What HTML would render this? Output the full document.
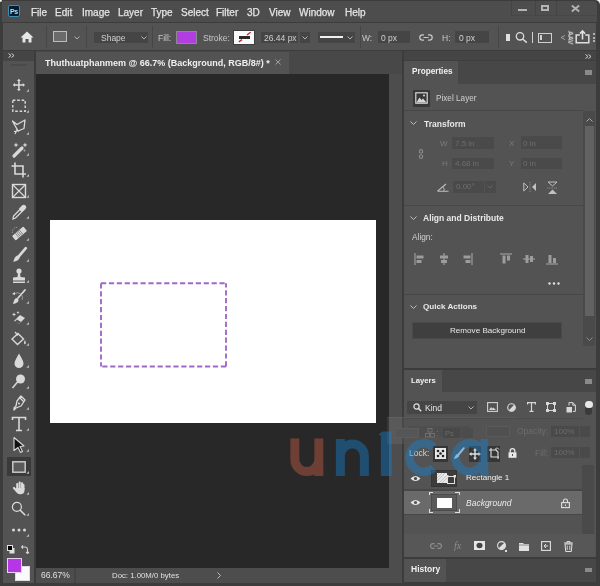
<!DOCTYPE html>
<html><head><meta charset="utf-8">
<style>
*{box-sizing:border-box;margin:0;padding:0}
html,body{width:600px;height:586px;overflow:hidden;background:#f4f4f4}
body{position:relative;-webkit-font-smoothing:antialiased;font-family:"Liberation Sans",sans-serif;color:#d4d4d4}
.a{position:absolute}
.t{position:absolute;white-space:nowrap;line-height:1;will-change:transform}
svg{position:absolute;overflow:visible}
</style></head><body>
<!-- window frame -->
<div class="a" style="left:0;top:0;width:600px;height:586px;background:#3c3c3c;border-top-right-radius:5px;border-top-left-radius:2px"></div>
<!-- menu bar -->
<div class="a" style="left:2px;top:1px;width:595px;height:21px;background:#4d4d4d;border-top-right-radius:4px"></div>

<!-- ps logo -->
<div class="a" style="left:8px;top:5px;width:12px;height:12px;border-radius:2px;background:#001e36;border:1px solid #3d8fb0"></div>
<div class="t" style="left:10px;top:7.5px;font-size:7px;font-weight:bold;color:#b8e0f8;letter-spacing:-0.3px">Ps</div>
<!-- window controls -->
<div class="a" style="left:511px;top:1px;width:1px;height:15px;background:#444"></div>
<div class="a" style="left:535px;top:1px;width:1px;height:15px;background:#444"></div>
<div class="a" style="left:556px;top:1px;width:1px;height:15px;background:#444"></div>
<div class="a" style="left:511px;top:15px;width:85px;height:1px;background:#474747"></div>
<div class="a" style="left:518px;top:9px;width:9px;height:2px;background:#b4b4b4"></div>
<div class="a" style="left:541px;top:5px;width:8px;height:6px;border:2px solid #b4b4b4"></div>
<svg style="left:571px;top:5px" width="9" height="7" viewBox="0 0 9 7"><path d="M0.8 0.5 L8.2 6.5 M8.2 0.5 L0.8 6.5" stroke="#b4b4b4" stroke-width="1.8"/></svg>
<!-- corners -->
<div class="a" style="left:0;top:0;width:2px;height:2px;background:#f0f0f0;border-bottom-right-radius:2px"></div>
<div id="menu">
<div class="t" style="left:31px;top:7.5px;font-size:10px;color:#e4e4e4;-webkit-text-stroke:0.25px #e4e4e4">File</div>
<div class="t" style="left:55px;top:7.5px;font-size:10px;color:#e4e4e4;-webkit-text-stroke:0.25px #e4e4e4">Edit</div>
<div class="t" style="left:82px;top:7.5px;font-size:10px;color:#e4e4e4;-webkit-text-stroke:0.25px #e4e4e4">Image</div>
<div class="t" style="left:118px;top:7.5px;font-size:10px;color:#e4e4e4;-webkit-text-stroke:0.25px #e4e4e4">Layer</div>
<div class="t" style="left:151px;top:7.5px;font-size:10px;color:#e4e4e4;-webkit-text-stroke:0.25px #e4e4e4">Type</div>
<div class="t" style="left:181px;top:7.5px;font-size:10px;color:#e4e4e4;-webkit-text-stroke:0.25px #e4e4e4">Select</div>
<div class="t" style="left:216px;top:7.5px;font-size:10px;color:#e4e4e4;-webkit-text-stroke:0.25px #e4e4e4">Filter</div>
<div class="t" style="left:247px;top:7.5px;font-size:10px;color:#e4e4e4;-webkit-text-stroke:0.25px #e4e4e4">3D</div>
<div class="t" style="left:269px;top:7.5px;font-size:10px;color:#e4e4e4;-webkit-text-stroke:0.25px #e4e4e4">View</div>
<div class="t" style="left:299px;top:7.5px;font-size:10px;color:#e4e4e4;-webkit-text-stroke:0.25px #e4e4e4">Window</div>
<div class="t" style="left:345px;top:7.5px;font-size:10px;color:#e4e4e4;-webkit-text-stroke:0.25px #e4e4e4">Help</div>
</div>
<!-- options bar -->
<div class="a" style="left:3px;top:23px;width:593px;height:27px;background:#535353"></div>

<!-- options content -->
<div class="a" style="left:46px;top:26px;width:1px;height:22px;background:#464646"></div>
<div class="a" style="left:86px;top:26px;width:1px;height:22px;background:#464646"></div>
<div class="a" style="left:152px;top:26px;width:1px;height:22px;background:#464646"></div>
<div class="a" style="left:360px;top:26px;width:1px;height:22px;background:#464646"></div>
<div class="a" style="left:498px;top:26px;width:1px;height:22px;background:#464646"></div>
<svg style="left:20px;top:31px" width="14" height="12" viewBox="0 0 14 12"><path d="M7 0.5 L13.5 6.5 L11.5 6.5 L11.5 11.5 L8.5 11.5 L8.5 8 L5.5 8 L5.5 11.5 L2.5 11.5 L2.5 6.5 L0.5 6.5 Z" fill="#e6e6e6"/></svg>
<div class="a" style="left:53px;top:31px;width:14px;height:11px;border:1.5px solid #bdbdbd;background:#6b6b6b"></div>
<svg style="left:74px;top:36px" width="6" height="4" viewBox="0 0 6 4"><path d="M0.5 0.5 L3 3 L5.5 0.5" stroke="#b0b0b0" stroke-width="1" fill="none"/></svg>
<div class="a" style="left:94px;top:32px;width:54px;height:11px;background:#454545"></div>
<div class="t" style="left:101px;top:33.5px;font-size:8.5px;color:#d0d0d0">Shape</div>
<svg style="left:141px;top:36px" width="6" height="4" viewBox="0 0 6 4"><path d="M0.5 0.5 L3 3 L5.5 0.5" stroke="#b0b0b0" stroke-width="1" fill="none"/></svg>
<div class="t" style="left:158px;top:33.5px;font-size:8.5px;color:#c8c8c8">Fill:</div>
<div class="a" style="left:176px;top:30.5px;width:21px;height:13.5px;background:#b13ee0;border:1px solid #8a8a8a"></div>
<div class="t" style="left:203px;top:33.5px;font-size:8.5px;color:#c8c8c8">Stroke:</div>
<div class="a" style="left:233px;top:30px;width:22px;height:15px;background:#fafafa;border:1px solid #3e3e3e"></div>
<div class="a" style="left:238.8px;top:36.2px;width:10.8px;height:2.6px;background:#2a2a2a"></div>
<svg style="left:238px;top:32px" width="14" height="11" viewBox="0 0 14 11"><path d="M9 3 L12.6 0.2 M0.8 9.8 L4 7.6" stroke="#c02838" stroke-width="1.4"/></svg>
<div class="a" style="left:261px;top:31.5px;width:36.5px;height:11.5px;background:#454545"></div>
<div class="t" style="left:264px;top:33.5px;font-size:8.5px;color:#d0d0d0">26.44 px</div>
<div class="a" style="left:300px;top:31.5px;width:9.5px;height:11.5px;background:#454545"></div>
<svg style="left:302px;top:36px" width="6" height="4" viewBox="0 0 6 4"><path d="M0.5 0.5 L3 3 L5.5 0.5" stroke="#b0b0b0" stroke-width="1" fill="none"/></svg>
<div class="a" style="left:318px;top:31.5px;width:37px;height:11.5px;background:#454545"></div>
<div class="a" style="left:320px;top:36px;width:23px;height:2px;background:#f0f0f0"></div>
<svg style="left:347px;top:36px" width="6" height="4" viewBox="0 0 6 4"><path d="M0.5 0.5 L3 3 L5.5 0.5" stroke="#b0b0b0" stroke-width="1" fill="none"/></svg>
<div class="t" style="left:362px;top:33.5px;font-size:8.5px;color:#c8c8c8">W:</div>
<div class="a" style="left:378px;top:31px;width:32px;height:12px;background:#454545"></div>
<div class="t" style="left:381px;top:33.5px;font-size:8.5px;color:#d0d0d0">0 px</div>
<svg style="left:419px;top:34px" width="14" height="7" viewBox="0 0 14 7"><path d="M5 0.8 L3.5 0.8 A2.7 2.7 0 0 0 3.5 6.2 L5 6.2 M9 0.8 L10.5 0.8 A2.7 2.7 0 0 1 10.5 6.2 L9 6.2 M4.5 3.5 L9.5 3.5" stroke="#c8c8c8" stroke-width="1.2" fill="none"/></svg>
<div class="t" style="left:442px;top:33.5px;font-size:8.5px;color:#c8c8c8">H:</div>
<div class="a" style="left:455px;top:31px;width:34px;height:12px;background:#454545"></div>
<div class="t" style="left:459px;top:33.5px;font-size:8.5px;color:#d0d0d0">0 px</div>
<div class="a" style="left:506px;top:34px;width:4px;height:7px;background:#e0e0e0"></div>
<svg style="left:515px;top:32px" width="13" height="11" viewBox="0 0 13 11"><circle cx="5" cy="4.3" r="3.7" stroke="#dcdcdc" stroke-width="1.3" fill="none"/><path d="M7.6 7 L11.8 10.6" stroke="#dcdcdc" stroke-width="1.5"/></svg>
<div class="a" style="left:532px;top:32px;width:1.2px;height:11px;background:#d0d0d0"></div>
<div class="a" style="left:538px;top:32.5px;width:14px;height:10px;border:1.3px solid #d0d0d0"></div>
<div class="a" style="left:540px;top:35px;width:2px;height:5px;background:#d0d0d0"></div>
<svg style="left:560px;top:34.5px" width="6" height="5" viewBox="0 0 6 5"><path d="M5 0.5 L1 2.5 L5 4.5" fill="none" stroke="#aaa" stroke-width="0.9"/></svg>
<div class="t" style="left:563.5px;top:34px;font-size:7px;font-weight:bold;color:#d0d0d0;transform:rotate(90deg);transform-origin:50% 50%;letter-spacing:-0.3px">AAV</div>
<svg style="left:575px;top:30px" width="15" height="14" viewBox="0 0 15 14"><path d="M4.8 5 L1.2 5 L1.2 12.8 L13.8 12.8 L13.8 5 L10.2 5" stroke="#e0e0e0" stroke-width="1.5" fill="none"/><path d="M7.5 9.5 L7.5 1.2 M5 3.6 L7.5 0.9 L10 3.6" stroke="#e0e0e0" stroke-width="1.6" fill="none"/></svg>
<div class="a" style="left:593px;top:33px;width:1.5px;height:2px;background:#b0b0b0"></div>
<div class="a" style="left:593px;top:36.5px;width:1.5px;height:2px;background:#b0b0b0"></div>
<div class="a" style="left:593px;top:40px;width:1.5px;height:2px;background:#b0b0b0"></div>
<!-- tools panel -->
<div class="a" style="left:3px;top:51px;width:31px;height:531.5px;background:#535353"></div>
<div class="a" style="left:3px;top:51px;width:31px;height:10px;background:#454545"></div>
<!-- tools content -->
<div class="a" style="left:7px;top:457px;width:24px;height:19px;background:#3a3a3a"></div>
<svg style="left:8px;top:53px" width="7" height="5" viewBox="0 0 7 5"><path d="M0.5 0.5 L3 2.5 L0.5 4.5 M3.5 0.5 L6 2.5 L3.5 4.5" fill="none" stroke="#cfcfcf" stroke-width="1"/></svg>
<div class="a" style="left:11px;top:63.5px;width:16px;height:2px;background:#4a4a4a"></div>
<svg style="left:9px;top:75.30px" width="20" height="20" viewBox="0 0 20 20"><path d="M9.9 5.5 L9.9 14.4 M5.5 9.95 L14.3 9.95" stroke="#d9d9d9" stroke-width="1.5"/><path d="M9.9 3.7 L11.8 6 L8 6Z M9.9 16.2 L11.8 13.9 L8 13.9Z M3.7 9.95 L6 8.05 L6 11.85Z M16.1 9.95 L13.8 8.05 L13.8 11.85Z" fill="#d9d9d9"/><path d="M17.3 16.8 L20 14 L20 16.8 Z" fill="#b8b8b8"/></svg>
<svg style="left:9px;top:96.48px" width="20" height="20" viewBox="0 0 20 20"><rect x="3.8" y="4.3" width="12.4" height="11" fill="none" stroke="#d9d9d9" stroke-width="1.4" stroke-dasharray="2.6 1.8"/><path d="M17.3 16.8 L20 14 L20 16.8 Z" fill="#b8b8b8"/></svg>
<svg style="left:9px;top:117.66px" width="20" height="20" viewBox="0 0 20 20"><path d="M3.5 3 L8 6.5 L16 2 L15 10.5 L9 13 Z" fill="none" stroke="#d9d9d9" stroke-width="1.3" stroke-linejoin="round"/><path d="M8.5 11 L6 16 M5 13.5 L11 12.5" stroke="#d9d9d9" stroke-width="1.2"/><path d="M17.3 16.8 L20 14 L20 16.8 Z" fill="#b8b8b8"/></svg>
<svg style="left:9px;top:138.84px" width="20" height="20" viewBox="0 0 20 20"><path d="M5 17 L13 9" stroke="#d9d9d9" stroke-width="3.2" stroke-linecap="round"/><path d="M7 3.5 L7.7 5.3 L9.5 6 L7.7 6.7 L7 8.5 L6.3 6.7 L4.5 6 L6.3 5.3Z M16 3.5 L16.7 5.3 L18.5 6 L16.7 6.7 L16 8.5 L15.3 6.7 L13.5 6 L15.3 5.3Z" fill="#d9d9d9"/><circle cx="15.5" cy="11.5" r="1" fill="#aaa"/><path d="M17.3 16.8 L20 14 L20 16.8 Z" fill="#b8b8b8"/></svg>
<svg style="left:9px;top:160.02px" width="20" height="20" viewBox="0 0 20 20"><path d="M6 2.5 L6 14 L17 14 M2.5 6 L14 6 L14 17.5" fill="none" stroke="#d9d9d9" stroke-width="1.6"/><path d="M17.3 16.8 L20 14 L20 16.8 Z" fill="#b8b8b8"/></svg>
<svg style="left:9px;top:181.20px" width="20" height="20" viewBox="0 0 20 20"><rect x="3.5" y="3.5" width="13" height="13" fill="none" stroke="#d9d9d9" stroke-width="1.4"/><path d="M3.5 3.5 L16.5 16.5 M16.5 3.5 L3.5 16.5" stroke="#d9d9d9" stroke-width="1.2"/><path d="M17.3 16.8 L20 14 L20 16.8 Z" fill="#b8b8b8"/></svg>
<svg style="left:9px;top:202.38px" width="20" height="20" viewBox="0 0 20 20"><path d="M4 17 L4.5 14 L11 7.5 L13 9.5 L6.5 16Z" fill="none" stroke="#d9d9d9" stroke-width="1.3"/><path d="M10 6.5 L13 3.5 A2 2 0 0 1 16.5 7 L13.5 10Z" fill="#d9d9d9"/><path d="M17.3 16.8 L20 14 L20 16.8 Z" fill="#b8b8b8"/></svg>
<svg style="left:9px;top:223.56px" width="20" height="20" viewBox="0 0 20 20"><g transform="rotate(-40 10.5 9.5)"><rect x="3" y="6.6" width="15" height="5.8" rx="1" fill="#d9d9d9"/><path d="M7.5 6.6 L7.5 12.4 M9.2 6.6 L9.2 12.4 M10.9 6.6 L10.9 12.4 M12.6 6.6 L12.6 12.4" stroke="#6a6a6a" stroke-width="0.7"/></g><path d="M3.5 9 A4.5 4.5 0 0 1 9 3.5" fill="none" stroke="#aaa" stroke-width="0.9" stroke-dasharray="1 0.8"/><path d="M17.3 16.8 L20 14 L20 16.8 Z" fill="#b8b8b8"/></svg>
<svg style="left:9px;top:244.74px" width="20" height="20" viewBox="0 0 20 20"><path d="M16.8 3.2 L10 11.2" stroke="#d9d9d9" stroke-width="2.6" stroke-linecap="round"/><path d="M9.3 10.6 C6.5 10.5 5.5 13 4.3 16.8 C7.5 16.3 10.8 14.8 10.6 12Z" fill="#d9d9d9"/><path d="M17.3 16.8 L20 14 L20 16.8 Z" fill="#b8b8b8"/></svg>
<svg style="left:9px;top:265.92px" width="20" height="20" viewBox="0 0 20 20"><circle cx="10" cy="5" r="2.6" fill="#d9d9d9"/><path d="M9 7 L11 7 L11.5 11 L16 11.5 L16 14.5 L4 14.5 L4 11.5 L8.5 11 Z" fill="#d9d9d9"/><rect x="4" y="15.5" width="12" height="1.5" fill="#d9d9d9"/><path d="M17.3 16.8 L20 14 L20 16.8 Z" fill="#b8b8b8"/></svg>
<svg style="left:9px;top:287.10px" width="20" height="20" viewBox="0 0 20 20"><path d="M16 3 L9 11" stroke="#d9d9d9" stroke-width="1.8" stroke-linecap="round"/><path d="M8 11 C5.5 11 5 14 4 17 C7 16.5 10 15 9.5 12.5Z" fill="#d9d9d9"/><path d="M3 7 L6 5 L6 8Z" fill="#d9d9d9"/><path d="M6 6.5 A5 5 0 0 1 13 13" fill="none" stroke="#aaa" stroke-width="0.8"/><path d="M17.3 16.8 L20 14 L20 16.8 Z" fill="#b8b8b8"/></svg>
<svg style="left:9px;top:308.28px" width="20" height="20" viewBox="0 0 20 20"><path d="M5 13 L11 7 L16 10 L10 16 Z" fill="#d9d9d9"/><path d="M5.5 14 L8 11.5 L12 14 L10 16Z" fill="#555"/><path d="M5 4.5 L5.7 6 L7.2 6.5 L5.7 7 L5 8.5 L4.3 7 L2.8 6.5 L4.3 6Z M9 3 L9.5 4 L10.5 4.5 L9.5 5 L9 6 L8.5 5 L7.5 4.5 L8.5 4Z" fill="#d9d9d9"/><path d="M17.3 16.8 L20 14 L20 16.8 Z" fill="#b8b8b8"/></svg>
<svg style="left:9px;top:329.46px" width="20" height="20" viewBox="0 0 20 20"><path d="M3 10 L9 4.5 L14.5 10 L8.5 15.5Z" fill="none" stroke="#d9d9d9" stroke-width="1.4"/><path d="M6 3 L9 6.5" stroke="#d9d9d9" stroke-width="1.2"/><path d="M16 11 C15 13 14.5 14 15.5 15 C16.5 16 17.5 14 16 11Z" fill="#d9d9d9"/><path d="M17.3 16.8 L20 14 L20 16.8 Z" fill="#b8b8b8"/></svg>
<svg style="left:9px;top:350.64px" width="20" height="20" viewBox="0 0 20 20"><path d="M10 2.5 C8 6.5 5.5 9.5 5.5 12.5 A4.5 4.5 0 0 0 14.5 12.5 C14.5 9.5 12 6.5 10 2.5Z" fill="#d9d9d9"/><path d="M17.3 16.8 L20 14 L20 16.8 Z" fill="#b8b8b8"/></svg>
<svg style="left:9px;top:371.82px" width="20" height="20" viewBox="0 0 20 20"><circle cx="11.5" cy="7" r="4.5" fill="#d9d9d9"/><path d="M8.5 10 L3.5 16" stroke="#d9d9d9" stroke-width="1.5"/><path d="M17.3 16.8 L20 14 L20 16.8 Z" fill="#b8b8b8"/></svg>
<svg style="left:9px;top:393.00px" width="20" height="20" viewBox="0 0 20 20"><path d="M12 3 L16 7 L12 13 L7 15 L5 17 L5 15 L7 13 L8 8Z" fill="none" stroke="#d9d9d9" stroke-width="1.3" stroke-linejoin="round"/><path d="M10 4 L15 9" stroke="#d9d9d9" stroke-width="1.3"/><circle cx="10" cy="10.5" r="1" fill="#d9d9d9"/><path d="M17.3 16.8 L20 14 L20 16.8 Z" fill="#b8b8b8"/></svg>
<svg style="left:9px;top:414.18px" width="20" height="20" viewBox="0 0 20 20"><path d="M3.5 6 L3.5 3.5 L16.5 3.5 L16.5 6 M10 3.5 L10 16.5 M7 16.5 L13 16.5" fill="none" stroke="#d9d9d9" stroke-width="1.6"/><path d="M17.3 16.8 L20 14 L20 16.8 Z" fill="#b8b8b8"/></svg>
<svg style="left:9px;top:435.36px" width="20" height="20" viewBox="0 0 20 20"><path d="M5 2.5 L15 11 L11 11.5 L13.5 16.5 L11.5 17.5 L9 12.5 L5 15.5Z" fill="#111" stroke="#d9d9d9" stroke-width="1.1" stroke-linejoin="round"/><path d="M17.3 16.8 L20 14 L20 16.8 Z" fill="#b8b8b8"/></svg>
<svg style="left:9px;top:456.54px" width="20" height="20" viewBox="0 0 20 20"><rect x="3.8" y="4.8" width="12.4" height="10.4" fill="#5a5a5a" stroke="#cfcfcf" stroke-width="1.4"/><path d="M17.3 16.8 L20 14 L20 16.8 Z" fill="#b8b8b8"/></svg>
<svg style="left:9px;top:477.72px" width="20" height="20" viewBox="0 0 20 20"><rect x="7.2" y="5" width="2.1" height="7" rx="1" fill="#d9d9d9"/><rect x="9.6" y="3.6" width="2.1" height="8" rx="1" fill="#d9d9d9"/><rect x="12" y="4.2" width="2.1" height="8" rx="1" fill="#d9d9d9"/><rect x="13.6" y="6" width="1.9" height="6" rx="0.9" fill="#d9d9d9"/><path d="M7 10 L15.5 10 L15.5 12.5 C15.5 15 14 16.3 11.5 16.3 C9.5 16.3 8.5 15.5 7.5 14.5 L4 10.5 A1.1 1.1 0 0 1 5.5 9 L7 10.5Z" fill="#d9d9d9"/><path d="M17.3 16.8 L20 14 L20 16.8 Z" fill="#b8b8b8"/></svg>
<svg style="left:9px;top:498.90px" width="20" height="20" viewBox="0 0 20 20"><circle cx="7.9" cy="7.9" r="4.5" fill="none" stroke="#d9d9d9" stroke-width="1.2"/><path d="M11.2 11.2 L15.8 15.8" stroke="#d9d9d9" stroke-width="1.6" stroke-linecap="round"/><path d="M17.3 16.8 L20 14 L20 16.8 Z" fill="#b8b8b8"/></svg>
<svg style="left:9px;top:520.08px" width="20" height="20" viewBox="0 0 20 20"><circle cx="4.5" cy="10" r="1.5" fill="#d9d9d9"/><circle cx="10" cy="10" r="1.5" fill="#d9d9d9"/><circle cx="15.5" cy="10" r="1.5" fill="#d9d9d9"/><path d="M17.3 16.8 L20 14 L20 16.8 Z" fill="#b8b8b8"/></svg>
<svg style="left:7px;top:545px" width="8" height="9" viewBox="0 0 8 9"><rect x="2.5" y="3" width="5" height="5.5" fill="#e0e0e0"/><rect x="0.5" y="0.5" width="5" height="5" fill="#000" stroke="#e0e0e0" stroke-width="1"/></svg>
<svg style="left:21px;top:545px" width="8" height="9" viewBox="0 0 8 9"><path d="M0.5 2 L4 2 A2.5 2.5 0 0 1 6.5 4.5 L6.5 7.5 M0.5 2 L2 0.5 M0.5 2 L2 3.5 M6.5 8.5 L5 7 M6.5 8.5 L8 7" fill="none" stroke="#d0d0d0" stroke-width="1.1"/></svg>
<div class="a" style="left:14.5px;top:566px;width:15.5px;height:15px;background:#fafafa;border:1px solid #ddd"></div>
<div class="a" style="left:7px;top:558px;width:15px;height:15px;background:#b436e4;border:1px solid #e8d0f0"></div>
<!-- document tab row -->
<div class="a" style="left:36px;top:51px;width:365.5px;height:23px;background:#484848"></div>
<div class="a" style="left:36px;top:52px;width:253px;height:22px;background:#535353"></div>
<!-- canvas pasteboard -->
<div class="a" style="left:36px;top:74px;width:353px;height:494px;background:#282828"></div>
<!-- vertical scroll col -->
<div class="a" style="left:389px;top:74px;width:12.5px;height:508.5px;background:#4d4d4d"></div>
<!-- status bar -->
<div class="a" style="left:36px;top:568px;width:365.5px;height:14.5px;background:#4d4d4d"></div>
<!-- white canvas -->
<div class="a" style="left:50px;top:220px;width:326px;height:203px;background:#fff"></div>

<!-- doc tab text -->
<div class="t" style="left:45px;top:58.5px;font-size:9px;font-weight:bold;color:#f0f0f0">Thuthuatphanmem @ 66.7% (Background, RGB/8#) *</div>
<svg style="left:275px;top:59px" width="6" height="6" viewBox="0 0 6 6"><path d="M0.5 0.5 L5.5 5.5 M5.5 0.5 L0.5 5.5" stroke="#a8a8a8" stroke-width="0.9"/></svg>
<!-- status -->
<div class="a" style="left:74px;top:568px;width:2px;height:14.5px;background:#444"></div>
<div class="t" style="left:41px;top:571px;font-size:8.5px;color:#e0e0e0">66.67%</div>
<div class="t" style="left:112px;top:571.5px;font-size:7.8px;color:#e0e0e0">Doc: 1.00M/0 bytes</div>
<svg style="left:217px;top:572px" width="4" height="7" viewBox="0 0 4 7"><path d="M0.5 0.5 L3.5 3.5 L0.5 6.5" fill="none" stroke="#bbb" stroke-width="1"/></svg>
<!-- dashed rect -->
<svg style="left:0;top:0" width="600" height="586" viewBox="0 0 600 586"><g stroke="#a068c8" stroke-width="1.9" fill="none" stroke-dasharray="5.2 2.7">
<path d="M101 283.3 L226 283.3"/><path d="M101 283.3 L101 366.5"/><path d="M226 366.5 L101 366.5"/><path d="M226 366.5 L226 283.3"/></g></svg>
<!-- right panels -->
<div class="a" style="left:404px;top:51px;width:192px;height:10px;background:#454545"></div>
<div class="a" style="left:404px;top:61px;width:192px;height:307px;background:#535353"></div>
<div class="a" style="left:404px;top:60px;width:192px;height:1px;background:#3e3e3e"></div>
<div class="a" style="left:458px;top:61px;width:138px;height:23px;background:#474747"></div>
<div class="a" style="left:404px;top:370px;width:192px;height:187px;background:#535353"></div>
<div class="a" style="left:442px;top:370px;width:154px;height:22px;background:#474747"></div>
<div class="a" style="left:404px;top:558.5px;width:192px;height:23.5px;background:#535353"></div>
<div class="a" style="left:446px;top:558.5px;width:150px;height:23.5px;background:#474747"></div>

<!-- properties content -->
<svg style="left:585px;top:53.5px" width="7" height="5" viewBox="0 0 7 5"><path d="M0.5 0.5 L3 2.5 L0.5 4.5 M3.5 0.5 L6 2.5 L3.5 4.5" fill="none" stroke="#d0d0d0" stroke-width="1"/></svg>
<div class="t" style="left:411.5px;top:67.5px;font-size:8.2px;font-weight:bold;color:#f0f0f0">Properties</div>
<div class="a" style="left:585px;top:70px;width:7px;height:5px;background:#8a8a8a"></div>
<div class="a" style="left:413px;top:89.5px;width:17px;height:17px;background:#383838"></div>
<svg style="left:415px;top:92px" width="13" height="12" viewBox="0 0 13 12"><rect x="0.8" y="0.8" width="11.4" height="10.4" fill="none" stroke="#d8d8d8" stroke-width="1.2"/><path d="M1.5 10.5 L4.5 5.5 L6.5 8 L8 6.5 L11.5 10.5Z" fill="#d8d8d8"/><circle cx="9" cy="3.5" r="1" fill="#d8d8d8"/></svg>
<div class="t" style="left:435.5px;top:95px;font-size:8.2px;color:#d0d0d0">Pixel Layer</div>
<div class="a" style="left:404px;top:110px;width:179px;height:1px;background:#474747"></div>
<!-- scrollbar props -->
<div class="a" style="left:583px;top:111px;width:12px;height:235px;background:#4a4a4a"></div>
<div class="a" style="left:584.5px;top:125.5px;width:9.5px;height:190px;background:#626262"></div>
<svg style="left:586px;top:118px" width="7" height="4" viewBox="0 0 7 4"><path d="M0.5 3.5 L3.5 0.5 L6.5 3.5" fill="none" stroke="#aaa" stroke-width="1"/></svg>
<svg style="left:586px;top:337px" width="7" height="4" viewBox="0 0 7 4"><path d="M0.5 0.5 L3.5 3.5 L6.5 0.5" fill="none" stroke="#8a8a8a" stroke-width="1"/></svg>
<!-- transform -->
<svg style="left:410px;top:121px" width="7" height="4" viewBox="0 0 7 4"><path d="M0.5 0.5 L3.5 3.5 L6.5 0.5" fill="none" stroke="#c0c0c0" stroke-width="1"/></svg>
<div class="t" style="left:424px;top:119.5px;font-size:8.5px;font-weight:bold;color:#e8e8e8">Transform</div>
<div class="t" style="left:440px;top:139.5px;font-size:8px;color:#7a7a7a">W</div>
<div class="a" style="left:452px;top:137px;width:41.5px;height:11.5px;background:#4a4a4a"></div>
<div class="t" style="left:455px;top:139.5px;font-size:8px;color:#6e6e6e">7.5 in</div>
<div class="t" style="left:442px;top:159.5px;font-size:8px;color:#7a7a7a">H</div>
<div class="a" style="left:452px;top:157.5px;width:41.5px;height:11px;background:#4a4a4a"></div>
<div class="t" style="left:455px;top:159.5px;font-size:8px;color:#6e6e6e">4.68 in</div>
<div class="t" style="left:508.5px;top:139.5px;font-size:8px;color:#7a7a7a">X</div>
<div class="a" style="left:520.5px;top:136px;width:41px;height:12.5px;background:#4a4a4a"></div>
<div class="t" style="left:523px;top:139.5px;font-size:8px;color:#6e6e6e">0 in</div>
<div class="t" style="left:508.5px;top:159.5px;font-size:8px;color:#7a7a7a">Y</div>
<div class="a" style="left:520.5px;top:157.5px;width:41px;height:11px;background:#4a4a4a"></div>
<div class="t" style="left:523px;top:159.5px;font-size:8px;color:#6e6e6e">0 in</div>
<svg style="left:417px;top:147.5px" width="8" height="12" viewBox="0 0 8 12"><path d="M2.5 5 L2.5 3 A1.5 1.5 0 0 1 5.5 3 L5.5 5 M2.5 7 L2.5 9 A1.5 1.5 0 0 0 5.5 9 L5.5 7 M4 4.5 L4 7.5" fill="none" stroke="#8c8c8c" stroke-width="1.2"/></svg>
<svg style="left:436.5px;top:182.5px" width="12" height="9" viewBox="0 0 12 9"><path d="M0.5 8.2 L11.5 8.2 M0.5 8.2 L9 1" fill="none" stroke="#c0c0c0" stroke-width="1.1"/><path d="M6 4 A4 4 0 0 1 7 8" fill="none" stroke="#c0c0c0" stroke-width="0.9"/></svg>
<div class="a" style="left:453px;top:180.5px;width:30.5px;height:12px;background:#4a4a4a"></div>
<div class="t" style="left:455.5px;top:183px;font-size:8px;color:#6e6e6e">0.00°</div>
<div class="a" style="left:484.5px;top:180.5px;width:11px;height:12px;background:#4a4a4a"></div>
<svg style="left:487px;top:185px" width="6" height="4" viewBox="0 0 6 4"><path d="M0.5 0.5 L3 3 L5.5 0.5" fill="none" stroke="#6a6a6a" stroke-width="0.9"/></svg>
<svg style="left:522.5px;top:182px" width="14" height="10" viewBox="0 0 14 10"><path d="M0.8 1 L5 5 L0.8 9Z" fill="none" stroke="#c0c0c0" stroke-width="1"/><path d="M13 1 L9 5 L13 9Z" fill="#c0c0c0"/><path d="M7 0 L7 10" stroke="#9a9a9a" stroke-width="0.8" stroke-dasharray="1.2 1"/></svg>
<svg style="left:546.5px;top:180.5px" width="11" height="14" viewBox="0 0 11 14"><path d="M1 1 L10 1 L5.5 5Z" fill="none" stroke="#c0c0c0" stroke-width="1"/><path d="M1 13 L10 13 L5.5 8.5Z" fill="#c0c0c0"/><path d="M0 7 L11 7" stroke="#9a9a9a" stroke-width="0.8" stroke-dasharray="1.2 1"/></svg>
<div class="a" style="left:404px;top:205px;width:179px;height:1px;background:#474747"></div>
<!-- align -->
<svg style="left:410px;top:216px" width="7" height="4" viewBox="0 0 7 4"><path d="M0.5 0.5 L3.5 3.5 L6.5 0.5" fill="none" stroke="#c0c0c0" stroke-width="1"/></svg>
<div class="t" style="left:423px;top:214px;font-size:8.5px;font-weight:bold;color:#e8e8e8">Align and Distribute</div>
<div class="t" style="left:411.5px;top:233px;font-size:8.3px;color:#d0d0d0">Align:</div>
<svg style="left:413.8px;top:253px" width="12" height="12" viewBox="0 0 12 12"><path d="M1 0 L1 12" stroke="#9c9c9c" stroke-width="1.2"/><rect x="2.5" y="2.5" width="7" height="3" fill="#9c9c9c"/><rect x="2.5" y="7" width="5" height="3" fill="#9c9c9c"/></svg>
<svg style="left:437.5px;top:253px" width="12" height="12" viewBox="0 0 12 12"><path d="M6 0 L6 12" stroke="#9c9c9c" stroke-width="1.2"/><rect x="2" y="2.5" width="8" height="3" fill="#9c9c9c"/><rect x="3" y="7" width="6" height="3" fill="#9c9c9c"/></svg>
<svg style="left:461.0px;top:253px" width="12" height="12" viewBox="0 0 12 12"><path d="M11 0 L11 12" stroke="#9c9c9c" stroke-width="1.2"/><rect x="2.5" y="2.5" width="7" height="3" fill="#9c9c9c"/><rect x="4.5" y="7" width="5" height="3" fill="#9c9c9c"/></svg>
<svg style="left:499.5px;top:253px" width="12" height="12" viewBox="0 0 12 12"><path d="M0 1 L12 1" stroke="#9c9c9c" stroke-width="1.2"/><rect x="2.5" y="2.5" width="3" height="8" fill="#9c9c9c"/><rect x="7" y="2.5" width="3" height="5" fill="#9c9c9c"/></svg>
<svg style="left:523.0px;top:253px" width="12" height="12" viewBox="0 0 12 12"><path d="M0 6 L12 6" stroke="#9c9c9c" stroke-width="1.2"/><rect x="2.5" y="2" width="3" height="8" fill="#9c9c9c"/><rect x="7" y="3" width="3" height="6" fill="#9c9c9c"/></svg>
<svg style="left:546.0px;top:253px" width="12" height="12" viewBox="0 0 12 12"><path d="M0 11 L12 11" stroke="#9c9c9c" stroke-width="1.2"/><rect x="2.5" y="2" width="3" height="8" fill="#9c9c9c"/><rect x="7" y="5" width="3" height="5" fill="#9c9c9c"/></svg>
<svg style="left:548px;top:282px" width="12" height="3" viewBox="0 0 12 3"><circle cx="1.5" cy="1.5" r="1.2" fill="#e0e0e0"/><circle cx="6" cy="1.5" r="1.2" fill="#e0e0e0"/><circle cx="10.5" cy="1.5" r="1.2" fill="#e0e0e0"/></svg>
<div class="a" style="left:404px;top:294px;width:179px;height:1px;background:#474747"></div>
<svg style="left:410px;top:305px" width="7" height="4" viewBox="0 0 7 4"><path d="M0.5 0.5 L3.5 3.5 L6.5 0.5" fill="none" stroke="#c0c0c0" stroke-width="1"/></svg>
<div class="t" style="left:423px;top:302.5px;font-size:8.1px;font-weight:bold;color:#e8e8e8">Quick Actions</div>
<div class="a" style="left:411.5px;top:322px;width:150.5px;height:17px;background:#3f3f3f;border:1px solid #4a4a4a"></div>
<div class="t" style="left:449.5px;top:326.8px;font-size:8.1px;color:#e6e6e6">Remove Background</div>

<!-- layers panel -->
<div class="t" style="left:411px;top:376.5px;font-size:7.7px;font-weight:bold;color:#f0f0f0">Layers</div>
<div class="a" style="left:585px;top:379px;width:7px;height:5px;background:#8a8a8a"></div>
<div class="a" style="left:407px;top:401px;width:70px;height:13px;background:#454545"></div>
<svg style="left:413px;top:403px" width="9" height="9" viewBox="0 0 9 9"><circle cx="3.5" cy="3.5" r="2.6" fill="none" stroke="#e0e0e0" stroke-width="1.2"/><path d="M5.3 5.3 L8.2 8.2" stroke="#e0e0e0" stroke-width="1.5"/></svg>
<div class="t" style="left:425px;top:404px;font-size:8.5px;color:#e8e8e8">Kind</div>
<svg style="left:468px;top:406px" width="6" height="4" viewBox="0 0 6 4"><path d="M0.5 0.5 L3 3 L5.5 0.5" fill="none" stroke="#b0b0b0" stroke-width="1"/></svg>
<svg style="left:487px;top:402px" width="11" height="10" viewBox="0 0 11 10"><rect x="0.6" y="0.6" width="9.8" height="8.8" fill="none" stroke="#d0d0d0" stroke-width="1.1"/><path d="M2 8 L4 5 L5.5 6.5 L6.5 5.5 L9 8Z" fill="#d0d0d0"/></svg>
<svg style="left:507px;top:403px" width="9" height="9" viewBox="0 0 9 9"><circle cx="4.5" cy="4.5" r="3.8" fill="none" stroke="#d8d8d8" stroke-width="1.1"/><path d="M7.2 1.8 A3.8 3.8 0 0 1 1.8 7.2Z" fill="#d8d8d8"/></svg>
<svg style="left:527px;top:402px" width="9" height="10" viewBox="0 0 9 10"><path d="M0.6 2.5 L0.6 0.6 L8.4 0.6 L8.4 2.5 M4.5 0.6 L4.5 9.4 M2.5 9.4 L6.5 9.4" fill="none" stroke="#d8d8d8" stroke-width="1.2"/></svg>
<svg style="left:546px;top:402px" width="10" height="10" viewBox="0 0 10 10"><rect x="1.5" y="1.5" width="7" height="7" fill="none" stroke="#d8d8d8" stroke-width="1"/><rect x="0" y="0" width="3" height="3" fill="#d8d8d8"/><rect x="7" y="0" width="3" height="3" fill="#d8d8d8"/><rect x="0" y="7" width="3" height="3" fill="#d8d8d8"/><rect x="7" y="7" width="3" height="3" fill="#d8d8d8"/></svg>
<svg style="left:566px;top:402px" width="10" height="11" viewBox="0 0 10 11"><path d="M3 3.5 L3 0.6 L6.8 0.6 L9.4 3.2 L9.4 9.4 L7 9.4 M6.8 0.6 L6.8 3.2 L9.4 3.2" fill="none" stroke="#d8d8d8" stroke-width="1"/><rect x="0.5" y="5" width="5.5" height="5.5" fill="#d8d8d8"/></svg>
<div class="a" style="left:585px;top:405px;width:7px;height:10px;border-radius:3.5px;background:#3a3a3a"></div>
<div class="a" style="left:585px;top:400.5px;width:7.5px;height:7.5px;border-radius:50%;background:#e8e8e8"></div>
<div class="a" style="left:404px;top:418px;width:179px;height:1px;background:#4c4c4c"></div>
<!-- blend row -->
<div class="a" style="left:408px;top:426px;width:62px;height:11px;background:#4e4e4e"></div>
<div class="t" style="left:517px;top:427px;font-size:8.5px;color:#6c6c6c">Opacity:</div>
<div class="a" style="left:551px;top:426px;width:28px;height:11px;background:#4a4a4a"></div>
<div class="t" style="left:554px;top:427.5px;font-size:8px;color:#6c6c6c">100%</div>
<div class="a" style="left:580px;top:426px;width:10px;height:11px;background:#4a4a4a"></div>
<!-- lock row -->
<div class="t" style="left:408.5px;top:449px;font-size:8.5px;color:#d0d0d0">Lock:</div>
<div class="a" style="left:432.5px;top:445.5px;width:15.5px;height:16px;background:#363636"></div>
<svg style="left:435px;top:448px" width="11" height="11" viewBox="0 0 11 11"><rect x="0" y="0" width="11" height="11" fill="#e8e8e8"/><circle cx="3" cy="3" r="1.3" fill="#222"/><circle cx="8" cy="3" r="1.3" fill="#222"/><circle cx="5.5" cy="5.5" r="1.3" fill="#222"/><circle cx="3" cy="8" r="1.3" fill="#222"/><circle cx="8" cy="8" r="1.3" fill="#222"/></svg>
<svg style="left:453px;top:447px" width="12" height="13" viewBox="0 0 12 13"><path d="M10.8 1.2 L5.5 7.5" stroke="#d8d8d8" stroke-width="2" stroke-linecap="round"/><path d="M4.8 7 C2.8 7 2 9 0.8 12 C3.5 11.5 6 10.5 6.2 8.5Z" fill="#d8d8d8"/></svg>
<div class="a" style="left:468.5px;top:445.5px;width:12.5px;height:16px;background:#363636"></div>
<svg style="left:469px;top:447.5px" width="12" height="12" viewBox="0 0 12 12"><path d="M6 2 L6 10 M2 6 L10 6" stroke="#e0e0e0" stroke-width="1.4"/><path d="M6 0 L8 2.5 L4 2.5Z M6 12 L8 9.5 L4 9.5Z M0 6 L2.5 4 L2.5 8Z M12 6 L9.5 4 L9.5 8Z" fill="#e0e0e0"/></svg>
<div class="a" style="left:487px;top:445.5px;width:13px;height:16px;background:#363636"></div>
<svg style="left:487.5px;top:447px" width="12" height="12" viewBox="0 0 12 12"><path d="M3 1 L3 10 L11 10 M1 3 L8 3 L10 5 L10 12 M8 3 L8 1" fill="none" stroke="#e0e0e0" stroke-width="1.1"/><path d="M9 0.5 L11 2.5" stroke="#e0e0e0" stroke-width="1"/></svg>
<svg style="left:507.5px;top:447.5px" width="9" height="10" viewBox="0 0 9 10"><path d="M2.2 4.5 L2.2 3 A2.3 2.3 0 0 1 6.8 3 L6.8 4.5" fill="none" stroke="#e8e8e8" stroke-width="1.3"/><rect x="0.5" y="4.3" width="8" height="5.5" fill="#e8e8e8"/><rect x="4" y="6" width="1" height="2" fill="#555"/></svg>
<div class="t" style="left:535px;top:449px;font-size:8.5px;color:#6c6c6c">Fill:</div>
<div class="a" style="left:551px;top:447px;width:28px;height:11px;background:#4a4a4a"></div>
<div class="t" style="left:554px;top:448.5px;font-size:8px;color:#6c6c6c">100%</div>
<div class="a" style="left:580px;top:447px;width:10px;height:11px;background:#4a4a4a"></div>
<!-- layer list -->
<div class="a" style="left:404px;top:465px;width:178px;height:69px;background:#535353"></div>
<div class="a" style="left:582px;top:465px;width:12px;height:69px;background:#4a4a4a"></div>
<div class="a" style="left:404px;top:489px;width:178px;height:1.5px;background:#474747"></div>
<div class="a" style="left:404px;top:490.5px;width:178px;height:23px;background:#6a6a6a"></div>
<div class="a" style="left:404px;top:513.5px;width:178px;height:1px;background:#474747"></div>
<svg style="left:410px;top:474.5px" width="11" height="7" viewBox="0 0 11 7"><path d="M0.5 3.5 Q5.5 -1.5 10.5 3.5 Q5.5 8.5 0.5 3.5Z" fill="#e8e8e8"/><circle cx="5.5" cy="3.5" r="1.6" fill="#444"/></svg>
<svg style="left:410px;top:499px" width="11" height="7" viewBox="0 0 11 7"><path d="M0.5 3.5 Q5.5 -1.5 10.5 3.5 Q5.5 8.5 0.5 3.5Z" fill="#e8e8e8"/><circle cx="5.5" cy="3.5" r="1.6" fill="#555"/></svg>
<div class="a" style="left:431px;top:469.5px;width:26px;height:17px;background:#3c3c3c;border:1px solid #353535"></div>
<div class="a" style="left:436.5px;top:473px;width:10px;height:10px;background:#e8e8e8"></div>
<svg style="left:436.5px;top:473px" width="10" height="10" viewBox="0 0 10 10"><path d="M0 2 L2 0 M0 5 L5 0 M0 8 L8 0 M2 10 L10 2 M5 10 L10 5" stroke="#b8b8b8" stroke-width="0.7"/></svg>
<svg style="left:446px;top:475px" width="10" height="10" viewBox="0 0 10 10"><rect x="1.5" y="1.5" width="7" height="7" fill="#3c3c3c" stroke="#e0e0e0" stroke-width="1"/><rect x="0" y="0" width="2.5" height="2.5" fill="#e0e0e0"/><rect x="7.5" y="0" width="2.5" height="2.5" fill="#e0e0e0"/></svg>
<div class="t" style="left:465.5px;top:474px;font-size:8.1px;color:#f2f2f2">Rectangle 1</div>
<div class="a" style="left:429px;top:491.5px;width:30.5px;height:21.5px;border:1px solid #e0e0e0;background:#6a6a6a"></div>
<div class="a" style="left:433px;top:491px;width:22px;height:23px;background:#6a6a6a"></div>
<div class="a" style="left:428px;top:495px;width:33px;height:14px;background:#6a6a6a"></div>
<div class="a" style="left:431px;top:494px;width:26px;height:17px;background:#5a5a5a;border:1px solid #4c4c4c"></div>
<div class="a" style="left:436.5px;top:497.5px;width:15.5px;height:10.5px;background:#fff"></div>
<div class="t" style="left:465.5px;top:498.5px;font-size:8.5px;font-style:italic;color:#eaeaea">Background</div>
<svg style="left:561px;top:497.5px" width="9" height="10" viewBox="0 0 9 10"><path d="M2.5 4.5 L2.5 3 A2 2 0 0 1 6.5 3 L6.5 4.5" fill="none" stroke="#e0e0e0" stroke-width="1.1"/><rect x="0.6" y="4.6" width="7.8" height="5" fill="none" stroke="#e0e0e0" stroke-width="1.1"/><rect x="4" y="6.5" width="1" height="1.5" fill="#e0e0e0"/></svg>
<!-- layer bottom bar -->
<div class="a" style="left:404px;top:534px;width:191px;height:22.5px;background:#575757"></div>
<svg style="left:430px;top:543px" width="12" height="6" viewBox="0 0 12 6"><path d="M4.5 0.6 L3 0.6 A2.4 2.4 0 0 0 3 5.4 L4.5 5.4 M7.5 0.6 L9 0.6 A2.4 2.4 0 0 1 9 5.4 L7.5 5.4 M4 3 L8 3" fill="none" stroke="#8e8e8e" stroke-width="1.1"/></svg>
<div class="t" style="left:453.5px;top:540.5px;font-size:10px;font-style:italic;font-family:&quot;Liberation Serif&quot;,serif;color:#8e8e8e">fx</div>
<svg style="left:474px;top:541px" width="11" height="9" viewBox="0 0 11 9"><rect x="0" y="0" width="11" height="9" fill="#e6e6e6"/><ellipse cx="5.5" cy="4.5" rx="3" ry="2.7" fill="#444"/></svg>
<svg style="left:497px;top:541px" width="11" height="11" viewBox="0 0 11 11"><circle cx="4.5" cy="4.5" r="3.9" fill="none" stroke="#e0e0e0" stroke-width="1.1"/><path d="M7.3 1.7 A3.9 3.9 0 0 1 1.7 7.3Z" fill="#e0e0e0"/><rect x="8" y="9" width="2" height="2" fill="#e0e0e0"/></svg>
<svg style="left:519px;top:541.5px" width="10" height="9" viewBox="0 0 10 9"><path d="M0 1 L4 1 L5 2 L10 2 L10 9 L0 9Z" fill="#e0e0e0"/><path d="M0 3 L10 3" stroke="#555" stroke-width="0.6"/></svg>
<svg style="left:541px;top:541px" width="10" height="10" viewBox="0 0 10 10"><rect x="0.6" y="0.6" width="8.8" height="8.8" fill="none" stroke="#e0e0e0" stroke-width="1.1"/><path d="M3 5 L7 5 M3 5 L5 3 M3 5 L5 7" fill="none" stroke="#e0e0e0" stroke-width="1"/></svg>
<svg style="left:563.5px;top:540.5px" width="9" height="11" viewBox="0 0 9 11"><path d="M0 2 L9 2 M3 2 L3 0.6 L6 0.6 L6 2" fill="none" stroke="#e0e0e0" stroke-width="1"/><path d="M1 3 L8 3 L7.3 10.5 L1.7 10.5Z" fill="none" stroke="#e0e0e0" stroke-width="1"/><path d="M3.2 4.5 L3.2 9 M5.8 4.5 L5.8 9" stroke="#e0e0e0" stroke-width="0.9"/></svg>
<!-- history -->
<div class="t" style="left:411px;top:565px;font-size:8.5px;font-weight:bold;color:#f0f0f0">History</div>
<div class="a" style="left:585px;top:567.5px;width:7px;height:4.5px;background:#8a8a8a"></div>

<!-- ghost blend row -->
<div class="a" style="left:387px;top:417px;width:17px;height:27px;background:rgba(255,255,255,0.07)"></div>
<div class="a" style="left:387px;top:417px;width:130px;height:1px;background:rgba(255,255,255,0.05)"></div>
<div class="a" style="left:394px;top:427.5px;width:24.5px;height:10px;background:#565656;border:1px solid #5c5c5c"></div>
<svg style="left:425px;top:428px" width="14" height="10" viewBox="0 0 14 10"><rect x="3" y="0.5" width="4" height="3.5" fill="none" stroke="#6e6e6e" stroke-width="1"/><rect x="0.5" y="5.5" width="4" height="3.5" fill="none" stroke="#6e6e6e" stroke-width="1"/><rect x="5.5" y="5.5" width="4" height="3.5" fill="none" stroke="#6e6e6e" stroke-width="1"/><rect x="12" y="3" width="1" height="1" fill="#6e6e6e"/><rect x="12" y="7" width="1" height="1" fill="#6e6e6e"/></svg>
<div class="a" style="left:442.5px;top:428px;width:17px;height:10px;background:#484848"></div>
<div class="t" style="left:444.5px;top:429.5px;font-size:7.5px;color:#6a6a6a">Ps</div>
<div class="a" style="left:461.5px;top:428px;width:11px;height:10px;background:#4c4c4c"></div>
<div class="a" style="left:486px;top:426px;width:24px;height:11px;background:#505050;border:1px solid #5a5a5a"></div>
<!-- watermark -->
<svg style="left:0;top:0" width="600" height="586" viewBox="0 0 600 586">
<path d="M294.85 438.5 L294.85 459.5 A12 12 0 0 0 318.85 459.5 L318.85 438.5 M318.85 459.5 L318.85 476" fill="none" stroke="rgba(200,95,70,0.44)" stroke-width="9"/>
<g opacity="0.4">
<path d="M340.35 476 L340.35 456 A12 12 0 0 1 364.35 456 L364.35 476 M340.35 456 L340.35 439" fill="none" stroke="rgb(20,135,220)" stroke-width="9"/>
<path d="M380.8 476 L380.8 436 L378.5 434 L383 431.5 L391.7 431.5 L391.7 476Z" fill="rgb(20,135,220)"/>
<path d="M433.5 447.2 A14.2 14.2 0 1 0 433.5 467.8" fill="none" stroke="rgb(20,135,220)" stroke-width="8.6"/>
<circle cx="469.8" cy="457.5" r="14.2" fill="none" stroke="rgb(20,135,220)" stroke-width="8.6"/>
<rect x="480.3" y="439" width="8" height="37" fill="rgb(20,135,220)"/>
</g>
</svg>
</body></html>
